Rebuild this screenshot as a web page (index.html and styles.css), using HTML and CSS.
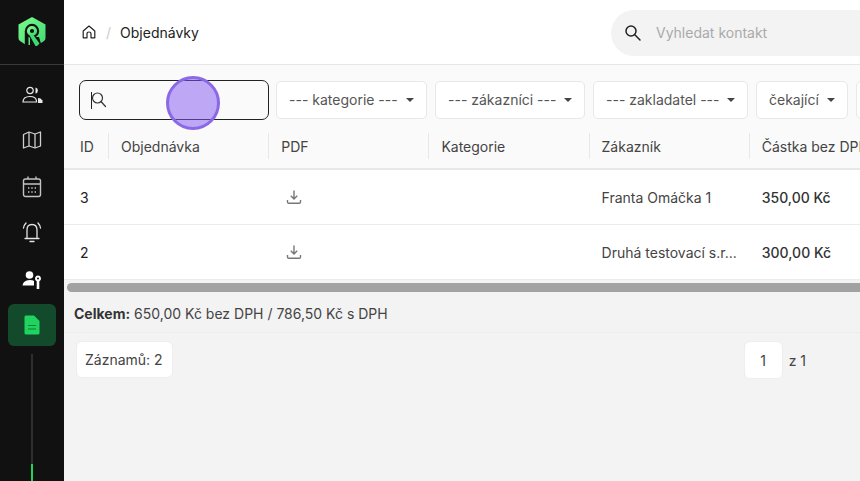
FILE: index.html
```html
<!DOCTYPE html>
<html lang="cs">
<head>
  <meta charset="UTF-8">
  <meta name="viewport" content="width=device-width, initial-scale=1.0">
  <title>Objednávky</title>
  <link rel="stylesheet" href="styles.css">
</head>
<body>
  <aside class="sidebar">
    <div class="logo">
      <svg width="28" height="30" viewBox="0 0 28 30">
        <defs>
          <linearGradient id="logo-fill" x1="0" y1="0" x2="1" y2="1">
            <stop offset="0" stop-color="#7dfb8c"/>
            <stop offset="1" stop-color="#3fd971"/>
          </linearGradient>
        </defs>
        <path fill="url(#logo-fill)" d="M14 0 L27.5 7.5 V21 Q27.5 23 26 24 L20 28 H8 L2 24 Q0.5 23 0.5 21 V7.5 Z"/>
        <circle cx="14" cy="14" r="7.2" fill="#111"/>
        <path fill="#111" d="M6.8 14 H10.5 V30 H6.8 Z M12 20 H21 L24 30 H12 Z"/>
        <circle cx="14" cy="14" r="3.6" fill="none" stroke="url(#logo-fill)" stroke-width="3"/>
        <path fill="#3fd971" d="M11 17.5 H15 L21.5 26.5 L19 29 H17.5 Z"/>
      </svg>
    </div>
    <nav class="nav">
      <a class="nav-item" href="#">
        <svg width="21" height="18" viewBox="0 0 21 18" fill="none" stroke="#e8e8e8" stroke-width="1.2">
          <circle cx="8" cy="4.5" r="3.2"/>
          <path d="M13.5 1.4 A3.2 3.2 0 0 1 13.5 7.6 Z" fill="#e8e8e8" stroke="none"/>
          <path d="M1 16 Q1 10.5 8 10.5 Q14 10.5 14.5 15 V16 Z"/>
          <path d="M16 12 L18.5 12.5 L20.5 14.5 V17 H16 Z" fill="#e8e8e8" stroke="none"/>
        </svg>
      </a>
      <a class="nav-item nav-map" href="#">
        <svg width="20" height="20" viewBox="0 0 20 20" fill="none" stroke="#cfcfcf" stroke-width="1.3" stroke-linejoin="round">
          <path d="M1.5 4.5 L7 2 L13 4 L18.5 2 V16 L13 18 L7 16 L1.5 18 Z"/>
          <path d="M7 2 V16 M13 4 V18"/>
        </svg>
      </a>
      <a class="nav-item" href="#">
        <svg width="20" height="22" viewBox="0 0 20 22" fill="none" stroke="#c4c4c4" stroke-width="1.4">
          <rect x="1.5" y="3" width="17" height="17.5" rx="2"/>
          <path d="M1.5 8 H18.5 M6 0.5 V3 M14 0.5 V3"/>
          <path d="M6 12 H7.4 M9.3 12 H10.7 M12.6 12 H14 M6 16 H7.4 M9.3 16 H10.7 M12.6 16 H14" stroke-width="1.6"/>
        </svg>
      </a>
      <a class="nav-item nav-bell" href="#">
        <svg width="20" height="22" viewBox="0 0 20 22" fill="none" stroke="#e4e4e4" stroke-width="1.3" stroke-linecap="round">
          <path d="M5 17 V9 Q5 3.5 10 3.5 Q15 3.5 15 9 V17"/>
          <path d="M3 17.5 H17 M8 20.5 H12"/>
          <path d="M1.5 7 Q2 4 4 2 M18.5 7 Q18 4 16 2"/>
        </svg>
      </a>
      <a class="nav-item nav-key" href="#">
        <svg width="20" height="18" viewBox="0 0 20 18" fill="#fff">
          <circle cx="7.5" cy="4" r="3.8"/>
          <path d="M0.5 14.5 Q1 9.5 7.5 9 Q11 9 12 10 V14.5 Z"/>
          <path fill-rule="evenodd" d="M16 4.5 A3 3 0 0 1 17.3 10.2 V18 H14.7 V10.2 A3 3 0 0 1 16 4.5 Z M16 6.4 A1 1 0 1 0 16 8.4 A1 1 0 1 0 16 6.4 Z"/>
        </svg>
      </a>
      <a class="nav-item active" href="#">
        <svg width="16" height="20" viewBox="0 0 16 20">
          <path fill="#1fd35f" d="M1.5 0.5 H10 L15.5 6 V18 Q15.5 19.5 14 19.5 H2 Q0.5 19.5 0.5 18 V2 Q0.5 0.5 1.5 0.5 Z"/>
          <path stroke="#0f7a3a" stroke-width="1" d="M4 10.5 H12 M4 14 H12"/>
        </svg>
      </a>
    </nav>
    <div class="nav-line"><span class="nav-line-fill"></span></div>
  </aside>

  <main class="main">
    <header class="topbar">
      <div class="crumbs">
        <svg width="14" height="14" viewBox="0 0 14 14" fill="none" stroke="#222" stroke-width="1.2" stroke-linejoin="round">
          <path d="M1.2 6 L7 1 L12.8 6 V12.8 H9 V8.5 Q9 7 7 7 Q5 7 5 8.5 V12.8 H1.2 Z"/>
        </svg>
        <span class="crumb-sep">/</span>
        <span class="crumb">Objednávky</span>
      </div>
      <div class="contact-search">
        <svg width="18" height="18" viewBox="0 0 18 18" fill="none" stroke="#222" stroke-width="1.5" stroke-linecap="round">
          <circle cx="7" cy="7" r="5"/>
          <path d="M10.8 10.8 L16 16"/>
        </svg>
        <span class="contact-placeholder">Vyhledat kontakt</span>
      </div>
    </header>

    <div class="filters">
      <div class="search-box">
        <span class="caret"></span>
        <svg class="search-icon" width="16" height="16" viewBox="0 0 16 16" fill="none" stroke="#333" stroke-width="1.2" stroke-linecap="round">
          <circle cx="6.5" cy="6" r="5"/>
          <path d="M10 9.5 L14.5 14.5"/>
        </svg>
      </div>
      <div class="select select-cat">--- kategorie ---<i class="arrow"></i></div>
      <div class="select select-cust">--- zákazníci ---<i class="arrow"></i></div>
      <div class="select select-founder">--- zakladatel ---<i class="arrow"></i></div>
      <div class="select select-state">čekající<i class="arrow"></i></div>
      <div class="select select-more"></div>
    </div>

    <div class="table-wrap">
      <table class="orders">
        <colgroup>
          <col class="col-id"><col class="col-std"><col class="col-std"><col class="col-std"><col class="col-std"><col class="col-std">
        </colgroup>
        <thead>
          <tr>
            <th>ID</th>
            <th>Objednávka</th>
            <th>PDF</th>
            <th>Kategorie</th>
            <th>Zákazník</th>
            <th>Částka bez DPH</th>
          </tr>
        </thead>
        <tbody>
          <tr>
            <td>3</td>
            <td></td>
            <td><svg class="dl" width="16" height="16" viewBox="0 0 16 16" fill="none" stroke="#777" stroke-width="1.4"><path d="M8 1.5 V9.5 M4.8 6.8 L8 10 L11.2 6.8"/><path d="M1.5 11 V13 Q1.5 14.2 2.8 14.2 H13.2 Q14.5 14.2 14.5 13 V11"/></svg></td>
            <td></td>
            <td class="cust">Franta Omáčka 1</td>
            <td class="price">350,00 Kč</td>
          </tr>
          <tr>
            <td>2</td>
            <td></td>
            <td><svg class="dl" width="16" height="16" viewBox="0 0 16 16" fill="none" stroke="#777" stroke-width="1.4"><path d="M8 1.5 V9.5 M4.8 6.8 L8 10 L11.2 6.8"/><path d="M1.5 11 V13 Q1.5 14.2 2.8 14.2 H13.2 Q14.5 14.2 14.5 13 V11"/></svg></td>
            <td></td>
            <td class="cust">Druhá testovací s.r...</td>
            <td class="price">300,00 Kč</td>
          </tr>
        </tbody>
      </table>
    </div>

    <div class="scrollbar"><div class="scrollbar-thumb"></div></div>

    <div class="summary"><b>Celkem:</b> 650,00 Kč bez DPH / 786,50 Kč s DPH</div>

    <div class="pager">
      <div class="pager-box">Záznamů: 2</div>
      <div class="pager-pages">
        <div class="pager-box pager-num">1</div>
        <span>z 1</span>
      </div>
    </div>
  </main>

  <div class="click-marker"></div>
</body>
</html>
```
FILE: styles.css
```css
body {
  margin: 0;
  height: 481px;
  display: flex;
  overflow: hidden;
  font-family: Inter, "Liberation Sans", sans-serif;
  font-size: 14px;
  color: #333;
  background-color: #f3f3f3;
}

.sidebar {
  width: 64px;
  flex-shrink: 0;
  background-color: #111;
  display: flex;
  flex-direction: column;
  align-items: center;
}

.logo {
  width: 100%;
  height: 64px;
  border-bottom: 1px solid #3a3a3a;
  display: flex;
  align-items: center;
  justify-content: center;
}

.nav {
  width: 48px;
  padding-top: 7px;
  display: flex;
  flex-direction: column;
}

.nav-item {
  height: 46px;
  display: flex;
  align-items: center;
  justify-content: center;
  border-radius: 6px;
}

.nav-map svg,
.nav-bell svg {
  margin-bottom: 2px;
}

.nav-key svg {
  margin-top: 2px;
}

.nav-item.active {
  height: 42px;
  margin-top: 2px;
  background-color: #134a2b;
}

.nav-line {
  width: 2px;
  flex: 1;
  margin-top: 8px;
  background-color: #2e2e2e;
  display: flex;
  flex-direction: column;
  justify-content: flex-end;
}

.nav-line-fill {
  height: 17px;
  background-color: #1fd35f;
}

.main {
  flex: 1;
  min-width: 0;
  display: flex;
  flex-direction: column;
}

.topbar {
  height: 64px;
  background-color: #fff;
  border-bottom: 1px solid #e6e6e6;
  display: flex;
  align-items: center;
  justify-content: space-between;
  padding-left: 18px;
}

.crumbs {
  display: flex;
  align-items: center;
}

.crumb-sep {
  margin: 0 9px 0 10px;
  color: #ccc;
}

.crumb {
  color: #222;
}

.contact-search {
  width: 249px;
  height: 46px;
  margin-top: 1px;
  background-color: #f3f3f3;
  border-radius: 23px 0 0 23px;
  box-sizing: border-box;
  padding-left: 13px;
  display: flex;
  align-items: center;
  gap: 14px;
}

.contact-placeholder {
  color: #aaa;
}

.filters {
  height: 59px;
  background-color: #fafafa;
  box-sizing: border-box;
  padding: 15px 0 0 15px;
  display: flex;
  gap: 8px;
  overflow: hidden;
}

.search-box {
  width: 190px;
  height: 40px;
  box-sizing: border-box;
  flex-shrink: 0;
  margin-right: -1px;
  border: 1px solid #222;
  border-radius: 7px;
  background-color: #fafafa;
  padding-left: 11px;
  display: flex;
  align-items: center;
}

.caret {
  width: 1px;
  height: 17px;
  background-color: #222;
}

.search-icon {
  margin: -1px 0 0 -1px;
}

.select {
  height: 38px;
  margin-top: 1px;
  box-sizing: border-box;
  flex-shrink: 0;
  background-color: #fff;
  border: 1px solid #e8e8e8;
  border-radius: 5px;
  color: #555;
  display: flex;
  align-items: center;
  justify-content: space-between;
  padding: 0 12px 1px;
}

.select-cat { width: 151px; }
.select-cust { width: 150px; }
.select-founder { width: 155px; }
.select-state { width: 92px; }
.select-more { width: 40px; }

.arrow {
  width: 0;
  height: 0;
  border-left: 4px solid transparent;
  border-right: 4px solid transparent;
  border-top: 4px solid #444;
}

.table-wrap {
  overflow: hidden;
}

.orders {
  width: 846px;
  table-layout: fixed;
  border-collapse: collapse;
  background-color: #fff;
}

.col-id { width: 45px; }
.col-std { width: 160.2px; }

.orders th {
  height: 44px;
  padding: 0 0 0 12px;
  background-color: #fafafa;
  border-bottom: 2px solid #e8e8e8;
  font-weight: 400;
  font-size: 14px;
  color: #444;
  text-align: left;
  white-space: nowrap;
  overflow: hidden;
  position: relative;
}

.orders th::after {
  content: "";
  position: absolute;
  right: 0;
  top: 9px;
  bottom: 9px;
  width: 1px;
  background-color: #e8e8e8;
}

.orders th:first-child {
  padding-left: 16px;
}

.orders td {
  height: 54px;
  padding: 0 0 0 12px;
  border-bottom: 1px solid #ececec;
  white-space: nowrap;
}

.orders td:first-child {
  padding-left: 16px;
  color: #222;
}

.dl {
  display: block;
  margin-left: 5px;
}

.cust {
  color: #444;
}

.price {
  font-weight: 500;
  color: #333;
}

.scrollbar {
  height: 12px;
  background-color: #f3f3f3;
  box-sizing: border-box;
  padding: 3px 0 0 3px;
}

.scrollbar-thumb {
  height: 9px;
  background-color: #a2a2a2;
  border-radius: 5px 0 0 5px;
}

.summary {
  height: 41px;
  box-sizing: border-box;
  padding: 2px 0 0 10px;
  display: flex;
  align-items: center;
  gap: 4px;
  background-color: #f3f3f3;
  border-bottom: 1px solid #ececec;
  color: #444;
}

.summary b {
  font-weight: 700;
  color: #333;
}

.pager {
  padding: 8px 54px 0 12px;
  display: flex;
  justify-content: space-between;
  align-items: flex-start;
}

.pager-box {
  height: 37px;
  box-sizing: border-box;
  padding: 0 8px 0 8px;
  min-width: 97px;
  background-color: #fff;
  border: 1px solid #eee;
  border-radius: 6px;
  display: flex;
  align-items: center;
  color: #444;
}

.pager-pages {
  display: flex;
  align-items: center;
  gap: 6px;
  color: #444;
}

.pager-num {
  width: 39px;
  min-width: 0;
  height: 38px;
  padding: 0;
  justify-content: center;
}

.click-marker {
  position: absolute;
  left: 166px;
  top: 76px;
  width: 54px;
  height: 54px;
  box-sizing: border-box;
  border: 3px solid #8a68e6;
  border-radius: 50%;
  background-color: rgba(130, 85, 240, 0.5);
}
```
